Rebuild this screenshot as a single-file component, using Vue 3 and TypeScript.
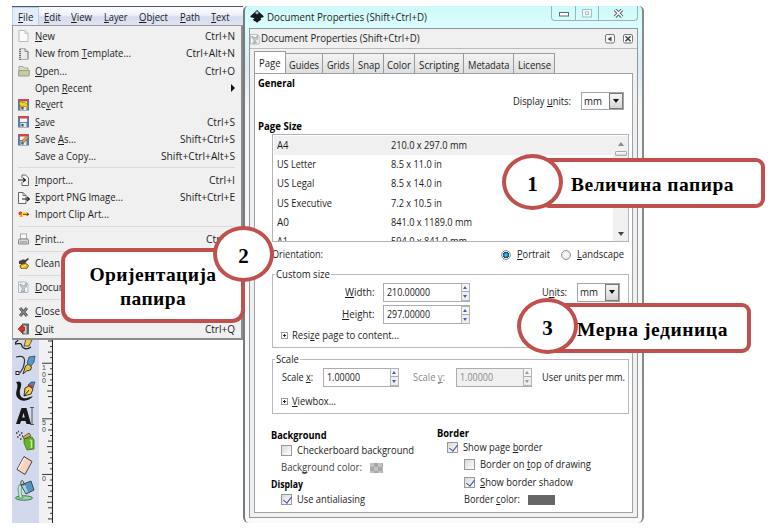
<script setup lang="ts">
import { defineComponent, h, onMounted, ref } from 'vue'

interface MenuItem {
  label?: string
  w?: number
  key?: string
  kw?: number
  icon?: string
  size: number
  sub?: boolean
}

// Label with "_" mnemonic marker. It always occupies w pixels: glyphs are
// condensed to fit, or tracked out when track is set.
const Txt = defineComponent({
  props: {
    t: { type: String, required: true },
    w: { type: Number, required: true },
    track: { type: Boolean, default: false },
  },
  setup(props) {
    const el = ref<HTMLElement | null>(null)
    onMounted(() => {
      const node = el.value
      if (!node) return
      const natural = node.getBoundingClientRect().width
      if (props.track) {
        node.style.letterSpacing = `${(props.w - natural) / props.t.length}px`
      } else {
        node.style.width = `${props.w}px`
        node.style.transform = `scaleX(${props.w / natural})`
        node.style.width = `${natural}px`
        node.style.marginRight = `${props.w - natural}px`
      }
    })
    return () => {
      const i = props.t.indexOf('_')
      const parts = i < 0 ? [props.t] : [props.t.slice(0, i), h('u', props.t[i + 1]), props.t.slice(i + 2)]
      return h('span', { ref: el, class: ['txt', props.track ? 'tracked' : 'tight'] }, parts)
    }
  },
})

const menubar = [
  { t: '_File', w: 15.5, cell: 27 },
  { t: '_Edit', w: 17, cell: 26 },
  { t: '_View', w: 21, cell: 33 },
  { t: '_Layer', w: 23.5, cell: 35 },
  { t: '_Object', w: 29, cell: 41 },
  { t: '_Path', w: 20, cell: 31 },
  { t: '_Text', w: 18.5, cell: 31 },
]

const items: MenuItem[] = [
  { label: '_New', w: 20, key: 'Ctrl+N', kw: 30, icon: 'page', size: 18 },
  { label: 'New from _Template...', w: 96, key: 'Ctrl+Alt+N', kw: 49, icon: 'template', size: 17 },
  { label: '_Open...', w: 32, key: 'Ctrl+O', kw: 30, icon: 'folder', size: 18 },
  { label: 'Open _Recent', w: 57, sub: true, size: 16 },
  { label: 'Re_vert', w: 28, icon: 'revert', size: 17 },
  { label: '_Save', w: 20, key: 'Ctrl+S', kw: 28, icon: 'save', size: 18 },
  { label: 'Save _As...', w: 41, key: 'Shift+Ctrl+S', kw: 55, icon: 'saveas', size: 17 },
  { label: 'Save a Copy...', w: 61, key: 'Shift+Ctrl+Alt+S', kw: 74, size: 16 },
  { size: 7 },
  { label: '_Import...', w: 38, key: 'Ctrl+I', kw: 26, icon: 'import', size: 18 },
  { label: '_Export PNG Image...', w: 88, key: 'Shift+Ctrl+E', kw: 55, icon: 'export', size: 17 },
  { label: 'Import Clip Art...', w: 74, icon: 'clip', size: 17 },
  { size: 7 },
  { label: '_Print...', w: 29, key: 'Ctrl+P', kw: 29, icon: 'print', size: 18 },
  { size: 6 },
  { label: 'Clean', w: 25, icon: 'clean', size: 18 },
  { size: 6 },
  { label: '_Docum', w: 33, icon: 'doc', size: 18 },
  { size: 7 },
  { label: '_Close', w: 25, icon: 'close', size: 17 },
  { label: '_Quit', w: 19, key: 'Ctrl+Q', kw: 30, icon: 'quit', size: 18 },
]

const floppy = '<rect x=".5" y=".5" width="10" height="10.500" fill="#5583b5" stroke="#5d7797"/><rect x="2" y="1" width="7" height="5" fill="#f4f4f4"/><rect x="1" y="0" width="9" height="2.500" fill="#d8463f"/><rect x="2.500" y="7" width="6" height="4" fill="#e6e6e6"/><rect x="3.500" y="8" width="2" height="2.500" fill="#345"/>'
const icons: Record<string, string> = {
  page: '<path d="M1 .5h6l3 3v8H1z" fill="#fbfbfb" stroke="#b8b8b8"/><path d="M7 .5v3h3" fill="none" stroke="#c4c4c4"/>',
  template: '<path d="M2 .5h5l3 3v8H2z" fill="#e9e9e9" stroke="#aaa"/><path d="M7 .5v3h3v7.500" fill="none" stroke="#888"/><path d="M2 1v11" stroke="#555" stroke-width="1.500" stroke-dasharray="1 1"/>',
  folder: '<path d="M1 1.500h4l1 1.500h4v7.500H1z" fill="#dcdfbf" stroke="#a5a98a"/><path d="M1 5.500h10.500l-.5 5.500H.5z" fill="#c5cba6" stroke="#9a9f7d"/>',
  revert: floppy + '<path d="M1 4.500l3-3v2h2.500c2 0 3.500 2 3.500 6.500-1-2-2-2.500-3.500-2.500H4v2z" fill="#f3d21c" stroke="#9b7600" stroke-width=".7"/>',
  save: floppy,
  saveas: floppy + '<path d="M3.500 9l1-3 4.500-4.500 1.800 1.800L6.500 8z" fill="#e8a24a" stroke="#6b4a25" stroke-width=".6"/>',
  import: '<path d="M4 4V1h3.500l3 3v7.500H4V8" fill="#fafafa" stroke="#666"/><path d="M0 6h7M5 4l2.500 2L5 8" fill="none" stroke="#222" stroke-width="1.100"/>',
  export: '<path d="M.5.5H5l3 3v8H.5z" fill="#f8f8f8" stroke="#666"/><path d="M5 .5v3h3" fill="none" stroke="#777"/><path d="M4 7h7M9 5l2.500 2L9 9" fill="none" stroke="#222" stroke-width="1.200"/>',
  clip: '<circle cx="2.500" cy="4.500" r="2" fill="#e03a2c"/><path d="M1.500 8l1.500-4 2 4z" fill="#ffa02a"/><rect x="4" y="3" width="3.500" height="3.500" fill="#ffe21c"/><path d="M5 5.300h5.500M8.500 3.800l2.500 1.500-2.500 1.500" fill="none" stroke="#8a3500" stroke-width="1"/>',
  print: '<rect x="2.500" y="1" width="6" height="5" fill="#fafafa" stroke="#aaa"/><path d="M1 6h9l.5 2v3H.5V8z" fill="#d9d9d9" stroke="#888"/><path d="M2 9h7" stroke="#888"/>',
  clean: '<path d="M1 4c3-1 4-2 6-1l3-2 1 1-3 3c0 2-3 3-7 2z" fill="#444"/><path d="M2 9c2-3 7-3 8-1s-1 4-4 4-4-1-4-3z" fill="#e9b91b" stroke="#4b3a08" stroke-width=".8"/><path d="M4 10l4-2" stroke="#fff3a0"/>',
  doc: '<path d="M.5 1H8l2 2v8.500H.5z" fill="#f3f5f7" stroke="#b3b8be"/><path d="M2 3c0 3 2 3 2.500 5L3 10.500h4L6 8c3-2 3-4 2-6L6.500 5 4 4z" fill="#c3ccd6" stroke="#8c96a1" stroke-width=".7"/>',
  close: '<path d="M2 2l7 8M9 2l-7 8" stroke="#606060" stroke-width="3"/><path d="M2 2l7 8M9 2l-7 8" stroke="#999" stroke-width="1"/>',
  quit: '<rect x="4.500" y="1" width="6" height="10" fill="#5c6f63" stroke="#555" stroke-width=".8"/><path d="M5.500 2l3 1v8l-3-1z" fill="#c9cfcb"/><path d="M0 6l4-4v2h2.500v4H4v2z" fill="#d9322c" stroke="#881611" stroke-width=".6"/>',
}

const tools: { h: number; svg: string }[] = [
  { h: 14, svg: '<path d="M3 0c-1 2-3 2-3 4 4 0 6-2 7 2 1 3 5 4 9 1" stroke="#222" fill="none" stroke-width="1.300"/><path d="M9 6l2-7 6 1-3 6z" fill="#f6cf38" stroke="#333" stroke-width=".8"/>' },
  { h: 26, svg: '<path d="M1 3c11-3 9 5 7 11L5 19" fill="none" stroke="#333" stroke-width="1.200"/><rect x="1" y="17.500" width="3" height="3" fill="#fff" stroke="#222"/><path d="M8 20l2.500-8 3-2 3 3-1 3-4 1z" fill="#e7c33e" stroke="#222" stroke-width=".9"/><path d="M12 9l2-6 6-1-1 6-3 4z" fill="#5799bd" stroke="#234c68" stroke-width=".8"/>' },
  { h: 25, svg: '<path d="M1 2c6-2 6 2 4 8-1 6 2 9 7 8l6-2c-4 6-13 6-16 1C-1 12 5 7 1 2z" fill="#181818"/><path d="M9 16l1-8 4-2 4 3-2 5z" fill="#f5d04a" stroke="#222" stroke-width=".9"/><path d="M13 5l3-3h4l-2 6z" fill="#4c87b4" stroke="#244461" stroke-width=".7"/><path d="M13 5l5 3" stroke="#c22" stroke-width="2"/><path d="M9 16l5-6" stroke="#222"/>' },
  { h: 25, svg: '<path d="M1 19L6.500 3h5L16 19h-4.500l-1-3H6l-1 3zM7.200 12.500h2.600L8.500 8z" fill="#181818" fill-rule="evenodd"/><path d="M15 2.500h4M15 19.500h4M17 2.500v17" stroke="#555" fill="none"/>' },
  { h: 25, svg: '<path d="M9 9l8-2 2 3v9l-7 1-3-7z" fill="#67b22d" stroke="#3b6f18" stroke-width=".8"/><path d="M15 10l1.500 1v7" stroke="#c3ee83" fill="none" stroke-width="1.500"/><path d="M8 7l6-4 2 3-7 3z" fill="#dcae45" stroke="#444" stroke-width=".8"/><path d="M1 3h1.500M4 5h1.500M2 7h1.500M5 9h1.500M6 3h1.500M7 6h1M3 1.500h1" stroke="#333" stroke-width="1.500"/>' },
  { h: 24, svg: '<path d="M9 1.500l8 5-7 13-8-5z" fill="#f9d1bf" stroke="#444"/><path d="M9.500 3L3.500 14" stroke="#fff3ec" stroke-width="1.500"/>' },
  { h: 28, svg: '<ellipse cx="9" cy="19" rx="8.500" ry="2.200" fill="#9ad5aa" stroke="#3c7a50"/><path d="M4 6c-2 4 0 8 0 13h4C6 15 5 10 8 6z" fill="#c7efd0" stroke="#3c7a50" stroke-width=".7"/><path d="M6 6l10-4 3 9-8 4z" fill="#5795b6" stroke="#2a4c60"/><path d="M7 7l3-1 3 7-2 1z" fill="#a9d0e2"/><path d="M6 6C5 0 9 0 9 6" fill="none" stroke="#444"/>' },
]

const ticks = Array.from({ length: 33 }, (_, i) => {
  const y = 1 + i * 5.56
  const n = (i + 6) % 10
  return { y, x: n === 0 ? 3 : n === 5 ? 8 : i % 2 ? 11 : 9 }
})

const tabs = [
  { t: 'Page', w: 21.5, cell: 32 },
  { t: 'Guides', w: 30, cell: 37 },
  { t: 'Grids', w: 22.5, cell: 31 },
  { t: 'Snap', w: 22, cell: 30 },
  { t: 'Color', w: 24, cell: 31 },
  { t: 'Scripting', w: 40, cell: 49 },
  { t: 'Metadata', w: 41.5, cell: 50 },
  { t: 'License', w: 33, cell: 41 },
]

const sizes = [
  ['A4', 11.5, '210.0 x 297.0 mm', 76],
  ['US Letter', 39, '8.5 x 11.0 in', 51],
  ['US Legal', 37.5, '8.5 x 14.0 in', 51],
  ['US Executive', 55, '7.2 x 10.5 in', 51],
  ['A0', 12, '841.0 x 1189.0 mm', 81],
  ['A1', 11, '594.0 x 841.0 mm', 76],
] as [string, number, string, number][]
</script>

<template>
  <div class="stage">
    <div class="shot">
      <div class="app">
        <div class="menubar">
          <div v-for="(m, i) in menubar" :key="m.t" class="mb" :class="{ on: i === 0 }" :style="{ width: m.cell + 'px' }">
            <Txt :t="m.t" :w="m.w" />
          </div>
        </div>
        <div class="menu">
          <div v-for="(it, i) in items" :key="i" class="item" :class="{ sep: !it.label }" :style="{ height: it.size + 'px' }">
            <template v-if="it.label">
              <svg class="ico" width="12" height="12" viewBox="0 0 12 12" v-html="it.icon ? icons[it.icon] : ''"></svg>
              <Txt :t="it.label" :w="it.w ?? 0" />
              <span class="grow"></span>
              <Txt v-if="it.key" :t="it.key" :w="it.kw ?? 0" />
              <svg v-if="it.sub" width="4" height="8" viewBox="0 0 4 8"><path d="M0 0l4 4-4 4z" fill="#111" /></svg>
            </template>
          </div>
        </div>
        <div class="work">
          <div class="tools">
            <svg v-for="(t, i) in tools" :key="i" width="22" :height="t.h" :viewBox="`0 0 22 ${t.h}`" v-html="t.svg"></svg>
          </div>
          <svg class="ruler" width="14" height="183" viewBox="0 0 14 183">
            <path d="M13.500 0V183" stroke="#222" />
            <path v-for="k in ticks" :key="k.y" :d="`M${k.x} ${k.y}H13`" stroke="#222" stroke-width=".9" />
            <g class="rnum">
              <text x="3" y="30">1</text><text x="3" y="36.500">0</text><text x="3" y="43">0</text>
              <text x="3" y="85">5</text><text x="3" y="92">0</text>
              <text x="3" y="140.500">0</text>
            </g>
          </svg>
        </div>
      </div>

      <div class="win">
        <div class="title">
          <svg class="logo" width="14" height="13" viewBox="0 0 14 13"><path d="M7 0l6.500 6c.8 1-1.500 1.500-3 2 0 1 1 1 .5 1.700C10 11 8.500 10.500 7 13c-1-2-3-1.500-4-3.300C2.800 8.500 5 9 4 8 2 7.500-.5 7 .5 6z" fill="#15191c" /><path d="M7 1l2 2-1 .5-1 1-1-1-1-.5z" fill="#b9c6c8" /></svg>
          <Txt t="Document Properties (Shift+Ctrl+D)" :w="160" />
          <span class="grow"></span>
          <div class="wbtns">
            <div class="wb w1"><svg width="10" height="5" viewBox="0 0 10 5"><rect x=".5" y=".5" width="9" height="3.500" fill="#fff" stroke="#62696e" /></svg></div>
            <div class="wb w2"><svg width="10" height="9" viewBox="0 0 10 9"><rect x=".5" y=".5" width="9" height="7.500" fill="#e9fafa" stroke="#a9bdc0" /><rect x="3.500" y="3" width="3" height="2.500" fill="#fff" stroke="#a9bdc0" /></svg></div>
            <div class="wb w3"><svg width="11" height="9" viewBox="0 0 11 9"><path d="M2 .8l7 7M9 .8l-7 7" stroke="#596268" stroke-width="3.400" /><path d="M2 .8l7 7M9 .8l-7 7" stroke="#fff" stroke-width="1.500" /></svg></div>
          </div>
        </div>
        <div class="frame">
          <div class="dock">
            <svg width="11" height="12" viewBox="0 0 12 12" v-html="icons.doc"></svg>
            <Txt t="Document Properties (Shift+Ctrl+D)" :w="158.5" />
            <span class="grow"></span>
            <svg width="28" height="10" viewBox="0 0 28 10"><rect x=".5" y=".5" width="9" height="8.500" rx="1.500" fill="#f8f8f8" stroke="#777" /><path d="M6.500 2.500v5l-4-2.500z" fill="#444" /><rect x="18.500" y=".5" width="9" height="8.500" rx="1.500" fill="#f8f8f8" stroke="#777" /><path d="M20.500 2.300l5 5M25.500 2.300l-5 5" stroke="#444" stroke-width="1.500" /></svg>
          </div>
          <div class="tabs">
            <div v-for="(t, i) in tabs" :key="t.t" class="tab" :class="{ on: i === 0 }" :style="{ width: t.cell + 'px' }"><Txt :t="t.t" :w="t.w" /></div>
          </div>
          <div class="page">
            <div class="row general"><b><Txt t="General" :w="37" /></b></div>
            <div class="row units">
              <Txt t="Display _units:" :w="58" />
              <div class="combo"><Txt t="mm" :w="18" /><i><svg width="6" height="4" viewBox="0 0 6 4"><path d="M0 0h6L3 4z" fill="#111" /></svg></i></div>
            </div>
            <div class="row psize"><b><Txt t="Page Size" :w="44" /></b></div>
            <div class="list">
              <div class="rows">
                <div v-for="(s, i) in sizes" :key="s[0]" class="lr" :class="{ sel: i === 0 }">
                  <span class="name"><Txt :t="s[0]" :w="s[1]" /></span><Txt :t="s[2]" :w="s[3]" />
                </div>
              </div>
              <div class="sb">
                <svg width="6" height="4" viewBox="0 0 6 4"><path d="M0 4h6L3 0z" fill="#8a8a8a" /></svg>
                <div class="thumb"></div>
                <span class="grow"></span>
                <svg width="6" height="4" viewBox="0 0 6 4"><path d="M0 0h6L3 4z" fill="#444" /></svg>
              </div>
            </div>
            <div class="row orient">
              <Txt t="Orientation:" :w="51" />
              <span class="grow"></span>
              <span class="radio on"></span><Txt t="_Portrait" :w="33" />
              <span class="radio r2"></span><Txt t="_Landscape" :w="47" />
            </div>
            <fieldset class="custom">
              <legend><Txt t="Custom size" :w="54" /></legend>
              <div class="row spinrow first">
                <span class="lab"><Txt t="_Width:" :w="29.5" /></span>
                <div class="spin"><Txt t="210.00000" :w="43" /><i></i></div>
                <span class="grow"></span>
                <Txt t="U_nits:" :w="25" />
                <div class="combo tall"><Txt t="mm" :w="18" /><i><svg width="6" height="4" viewBox="0 0 6 4"><path d="M0 0h6L3 4z" fill="#111" /></svg></i></div>
              </div>
              <div class="row spinrow">
                <span class="lab"><Txt t="_Height:" :w="32.5" /></span>
                <div class="spin"><Txt t="297.00000" :w="43" /><i></i></div>
              </div>
              <div class="row expand"><span class="plus"></span><Txt t="Resi_ze page to content..." :w="107" /></div>
            </fieldset>
            <fieldset class="scale">
              <legend><Txt t="Scale" :w="23" /></legend>
              <div class="row scrow">
                <Txt t="Scale _x:" :w="31" />
                <div class="spin sx"><Txt t="1.00000" :w="33" /><i></i></div>
                <span class="dim sy"><Txt t="Scale _y:" :w="32" /></span>
                <div class="spin sx off"><Txt t="1.00000" :w="33" /><i></i></div>
                <span class="grow"></span>
                <Txt t="User units per mm." :w="83" />
              </div>
              <div class="row expand"><span class="plus"></span><Txt t="_Viewbox..." :w="44" /></div>
            </fieldset>
            <div class="cols">
              <div class="c1">
                <div class="row h16"><b><Txt t="Background" :w="55.5" /></b></div>
                <div class="row h15 in1"><span class="chk"></span><Txt t="Checkerboard background" :w="117" /></div>
                <div class="row h19 in1 soft"><Txt t="Back_ground color:" :w="81" /><span class="swatch checker"></span></div>
                <div class="row h14"><b><Txt t="Display" :w="32" /></b></div>
                <div class="row h16 in1"><span class="chk on"></span><Txt t="Use antialiasing" :w="68" /></div>
              </div>
              <div class="c2">
                <div class="row h14"><b><Txt t="Border" :w="32" /></b></div>
                <div class="row h15 in1"><span class="chk on"></span><Txt t="Show page _border" :w="79.5" /></div>
                <div class="row h19 in2"><span class="chk"></span><Txt t="Border on _top of drawing" :w="111" /></div>
                <div class="row h16 in2"><span class="chk on"></span><Txt t="_Show border shadow" :w="93" /></div>
                <div class="row h19 in2"><Txt t="Border _color:" :w="56" /><span class="swatch dark"></span></div>
              </div>
            </div>
          </div>
        </div>
      </div>
    </div>

    <div class="box b1"><Txt track t="Величина папира" :w="163" /></div>
    <div class="oval o1">1</div>
    <div class="box b2"><Txt track t="Оријентација" :w="127" /><Txt track t="папира" :w="66" /></div>
    <div class="oval o2">2</div>
    <div class="box b3"></div>
    <div class="oval o3">3</div>
    <div class="b3text"><Txt track t="Мерна јединица" :w="151" /></div>
  </div>
</template>

<style>
body { background: #fff; overflow: hidden; }
.txt { display: inline-block; white-space: pre; flex: none; }
.txt.tight { transform-origin: 0 50%; padding-bottom: 1px; }
.txt u { text-underline-offset: 1px; text-decoration-thickness: 1px; text-decoration-skip-ink: none; }
</style>

<style scoped>
.stage { position: relative; width: 774px; height: 531px; box-sizing: border-box; padding: 6px 0 0 12px; overflow: hidden; font: 10.8px/14px "Open Sans", "Noto Sans", sans-serif; color: #1c1c1c; background: #fff; }
.stage * { box-sizing: border-box; }
svg { display: block; flex: none; }
b { display: flex; color: #000; }
.grow { flex: 1; }
.shot { display: flex; height: 517px; }
.app { width: 231px; display: flex; flex-direction: column; flex: none; }
.menubar { display: flex; height: 19px; background: linear-gradient(#fbfcfe 0, #eef1f9 45%, #d5dbee 55%, #dfe4f4); border-top: 1px solid #50575f; flex: none; }
.mb { display: flex; justify-content: center; align-items: center; padding-top: 2px; height: 18px; }
.mb.on { background: #e4edfa; border: 1px solid #b4d3f0; padding-top: 1px; border-bottom: 0; }
.menu { height: 315px; flex: none; padding: 1px 6px 0 5px; background: #f0f0f0; border: 1px solid #9b9b9b; border-right: 2px solid #8b8b8b; border-bottom: 2px solid #8b8b8b; }
.item { display: flex; align-items: center; }
.ico { margin-right: 5px; }
.item.sep { background: linear-gradient(#dadada, #dadada) center / 100% 1px no-repeat; }
.work { display: flex; flex: 1; }
.tools { width: 27px; background: #d3d9ed; padding-left: 3px; display: flex; flex-direction: column; }
.tools svg { overflow: hidden; }
.ruler { background: #f1f1f1; }
.rnum text { font: 7px "Liberation Sans", sans-serif; fill: #444; }

.win { width: 401px; height: 517px; flex: none; border: 1px solid #6e7678; border-left: 2px solid #777b7c; border-right: 2px solid #858a8b; border-top: 0; border-bottom: 0; border-radius: 5px 5px 6px 6px; padding: 0 4px 5px 4px; background: linear-gradient(#cdfbfb 0, #ddfcfd 22px, #dcebf6 60px, #f6f7f8 100px, #fafafa); }
.title { height: 22px; display: flex; align-items: flex-start; padding-left: 1px; font-size: 11.5px; }
.title > .txt { margin-top: 4px; }
.logo { margin: 4px 3px 0 0; }
.wbtns { display: flex; height: 15px; border: 1px solid #9db4b7; border-top: 0; border-radius: 0 0 4px 4px; }
.wb { display: flex; align-items: center; justify-content: center; border-right: 1px solid #9db4b7; }
.w1 { width: 24px; padding-top: 2px; }
.w2 { width: 23px; }
.w3 { width: 38px; border-right: 0; }
.frame { height: 490px; border: 1px solid #8f979b; background: #f0f0f0; }
.dock { height: 20px; display: flex; align-items: center; padding: 0 4px 0 0; border-bottom: 1px solid #bcbcbc; font-size: 11.5px; }
.tabs { display: flex; align-items: flex-end; height: 24px; padding-left: 4px; }
.tab { height: 20px; display: flex; justify-content: center; align-items: center; padding-top: 3px; background: linear-gradient(#f4f4f4, #dedede); border: 1px solid #9a9a9a; border-left: 0; border-bottom: 0; }
.tab.on { height: 22px; background: #fff; border-left: 1px solid #9a9a9a; padding-top: 2px; }
.page { margin: 0 4px; height: 440px; border: 1px solid #9ea1a9; background: #fff; padding: 0 3px; }
.row { display: flex; align-items: center; }
.general { height: 18px; padding-left: 0; }
.units { height: 18px; justify-content: flex-end; padding-right: 5px; }
.psize { height: 24px; align-items: flex-end; }
.combo { width: 43px; height: 18px; margin-left: 10px; border: 1px solid #a3a7ad; background: #fff; display: flex; align-items: center; justify-content: space-between; padding-left: 2px; }
.combo i { width: 14px; height: 16px; border: 1px solid #777; background: linear-gradient(#f7f7f7, #d5d5d5); display: flex; align-items: center; justify-content: center; }
.combo.tall { height: 19px; }
.combo.tall i { height: 17px; }
.list { display: flex; height: 108px; margin: 0 0 0 14px; border: 1px solid #b1b4bc; overflow: hidden; padding-top: 1px; }
.rows { flex: 1; overflow: hidden; padding-left: 1px; }
.lr { display: flex; align-items: center; height: 19.2px; padding-left: 3px; }
.lr.sel { background: #f0f0f0; }
.name { width: 113.5px; display: flex; }
.sb { width: 15px; background: #f0f0f0; display: flex; flex-direction: column; align-items: center; padding: 6px 0 5px; }
.thumb { width: 12px; height: 5px; flex: none; margin-top: 5px; border: 1px solid #aaa; border-radius: 1px; background: linear-gradient(#fff, #d4d4d4); }
.orient { height: 25px; padding: 0 5px 0 14px; margin-bottom: 2px; }
.radio { width: 10px; height: 10px; border-radius: 50%; border: 1px solid #929292; background: radial-gradient(#fff, #dcdcdc); margin-right: 6px; }
.radio.on { background: radial-gradient(circle, #3cb7e6 0 1px, #123f68 3px, #eee 3.5px); }
.radio.r2 { margin-left: 11px; }
fieldset { margin: 0 0 0 14px; padding: 0; border: 1px solid #b6b8bd; min-width: 0; }
legend { padding: 0 1px 0 1px; margin-left: 2px; height: 10px; line-height: 10px; display: flex; }
legend .txt { line-height: 10px; }
.custom { height: 79px; }
.scale { height: 60px; margin-top: 6px; }
.spinrow { height: 22.5px; padding-right: 8px; }
.spinrow.first { margin-top: 2px; }
.spinrow .lab { width: 101px; display: flex; justify-content: flex-end; }
.spin { width: 87px; height: 19px; margin-left: 9px; border: 1px solid #abadb3; border-right: 0; display: flex; justify-content: space-between; align-items: center; padding-left: 3px; background: #fff; flex: none; }
.spin i { position: relative; width: 9px; height: 18px; flex: none; border: 1px solid #b5b5b5; background: linear-gradient(#f5f5f5 0 7px, #aaa 7px 8px, #eee 8px); }
.spin i::before, .spin i::after { content: ""; position: absolute; left: 1px; border: 2.5px solid transparent; }
.spin i::before { top: 0; border-bottom: 3px solid #4560b0; }
.spin i::after { bottom: 0; border-top: 3px solid #4560b0; }
.spin.sx { width: 76px; margin-left: 10px; }
.spin.off { background: #f0f0f0; color: #8a8a8a; margin-left: 11px; }
.spin.off i::before { border-bottom-color: #999; }
.spin.off i::after { border-top-color: #999; }
.sy { margin-left: 14px; display: flex; }
.dim { color: #888; }
.scrow { height: 24px; padding: 0 3px 0 9px; margin-top: 1px; }
.expand { height: 18px; padding-left: 8px; }
.scale .expand { height: 24px; }
.plus { width: 7px; height: 7px; margin-right: 4px; border: 1px solid #999; background: linear-gradient(#225, #225) center / 3px 1px no-repeat, linear-gradient(#225, #225) center / 1px 3px no-repeat, #fff; }
.cols { display: flex; padding-left: 13px; }
.c1 { width: 166px; padding-top: 13px; }
.c2 { padding-top: 12px; }
.h14 { height: 14px; } .h15 { height: 15px; } .h16 { height: 16px; } .h19 { height: 19px; }
.in1 { padding-left: 10px; }
.in2 { padding-left: 27px; }
.soft { color: #444; }
.chk { width: 11px; height: 11px; margin-right: 5px; border: 1px solid #999; background: linear-gradient(135deg, #d8d8d8, #fff); position: relative; flex: none; }
.chk.on::after { content: ""; position: absolute; left: 3px; top: 0; width: 4px; height: 7px; border: solid #3b4fa0; border-width: 0 1.5px 1.5px 0; transform: rotate(38deg); }
.swatch { height: 10px; margin-left: 8px; }
.checker { width: 13px; background: repeating-conic-gradient(#a8a8a8 0 25%, #c2c2c2 0 50%) 0 0 / 8px 8px; }
.dark { width: 27px; background: #666; }

.box { position: absolute; border: 4px solid #c0504d; background: #fff; font: bold 19.5px/24px "Liberation Serif", serif; color: #000; display: flex; flex-direction: column; justify-content: center; align-items: flex-start; }
.b1 { left: 540px; top: 158px; width: 225px; height: 50px; border-radius: 9px; padding: 4px 0 0 27px; }
.b2 { left: 61px; top: 248px; width: 184px; height: 75px; border-radius: 13px; align-items: center; padding-top: 2px; }
.b3 { left: 540px; top: 303px; width: 211px; height: 50px; border-radius: 9px; }
.b3text { position: absolute; left: 577px; top: 318px; font: bold 19.5px/24px "Liberation Serif", serif; color: #000; }
.oval { position: absolute; width: 61px; height: 56px; border: 4px solid #c0504d; border-radius: 50%; background: #fff; display: flex; align-items: center; justify-content: center; padding-top: 3px; font: bold 21px/24px "Liberation Serif", serif; color: #000; }
.o1 { left: 502px; top: 154px; }
.o2 { left: 213px; top: 226px; }
.o3 { left: 517px; top: 298px; }
</style>
